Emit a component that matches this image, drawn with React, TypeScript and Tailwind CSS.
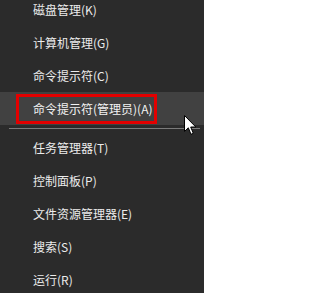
const top = [
  '磁盘管理(K)',
  '计算机管理(G)',
  '命令提示符(C)',
];

const bottom = [
  '任务管理器(T)',
  '控制面板(P)',
  '文件资源管理器(E)',
  '搜索(S)',
  '运行(R)',
];

const Row = ({ label }: { label: string }) => (
  <div className="flex h-[33px] items-center pl-[33px] text-[12px] text-[#ececec]">{label}</div>
);

export default function App() {
  return (
    <div
      className="relative h-[293px] w-[204px] overflow-hidden bg-[#2b2b2b]"
      style={{ fontFamily: '"Noto Sans CJK SC", "Noto Sans", sans-serif' }}
    >
      <div className="mt-[-7px] flex flex-col">
        {top.map((t) => (
          <Row key={t} label={t} />
        ))}

        {/* hovered item */}
        <div className="relative flex h-[33px] items-center bg-[#414141] pl-[33px] text-[12px] text-[#f2f2f2]">
          命令提示符(管理员)(A)
          <div className="absolute left-[16px] top-[2px] h-[30px] w-[141px] border-[3px] border-[#e30000]" />
        </div>

        <div className="flex h-[6px] items-center pl-[9px] pr-[4px]">
          <div className="h-px w-full bg-[#7a7a7a]" />
        </div>

        {bottom.map((t) => (
          <Row key={t} label={t} />
        ))}
      </div>

      {/* mouse pointer */}
      <svg className="absolute left-[184px] top-[115px]" width="13" height="21" viewBox="0 0 13 21">
        <path
          d="M0.5 0.5 L0.5 16.5 L4.3 12.8 L7 19.3 L9.3 18.3 L6.7 12 L11.8 12 Z"
          fill="#ffffff"
          stroke="#000000"
          strokeWidth="1"
          strokeLinejoin="miter"
        />
      </svg>
    </div>
  );
}
